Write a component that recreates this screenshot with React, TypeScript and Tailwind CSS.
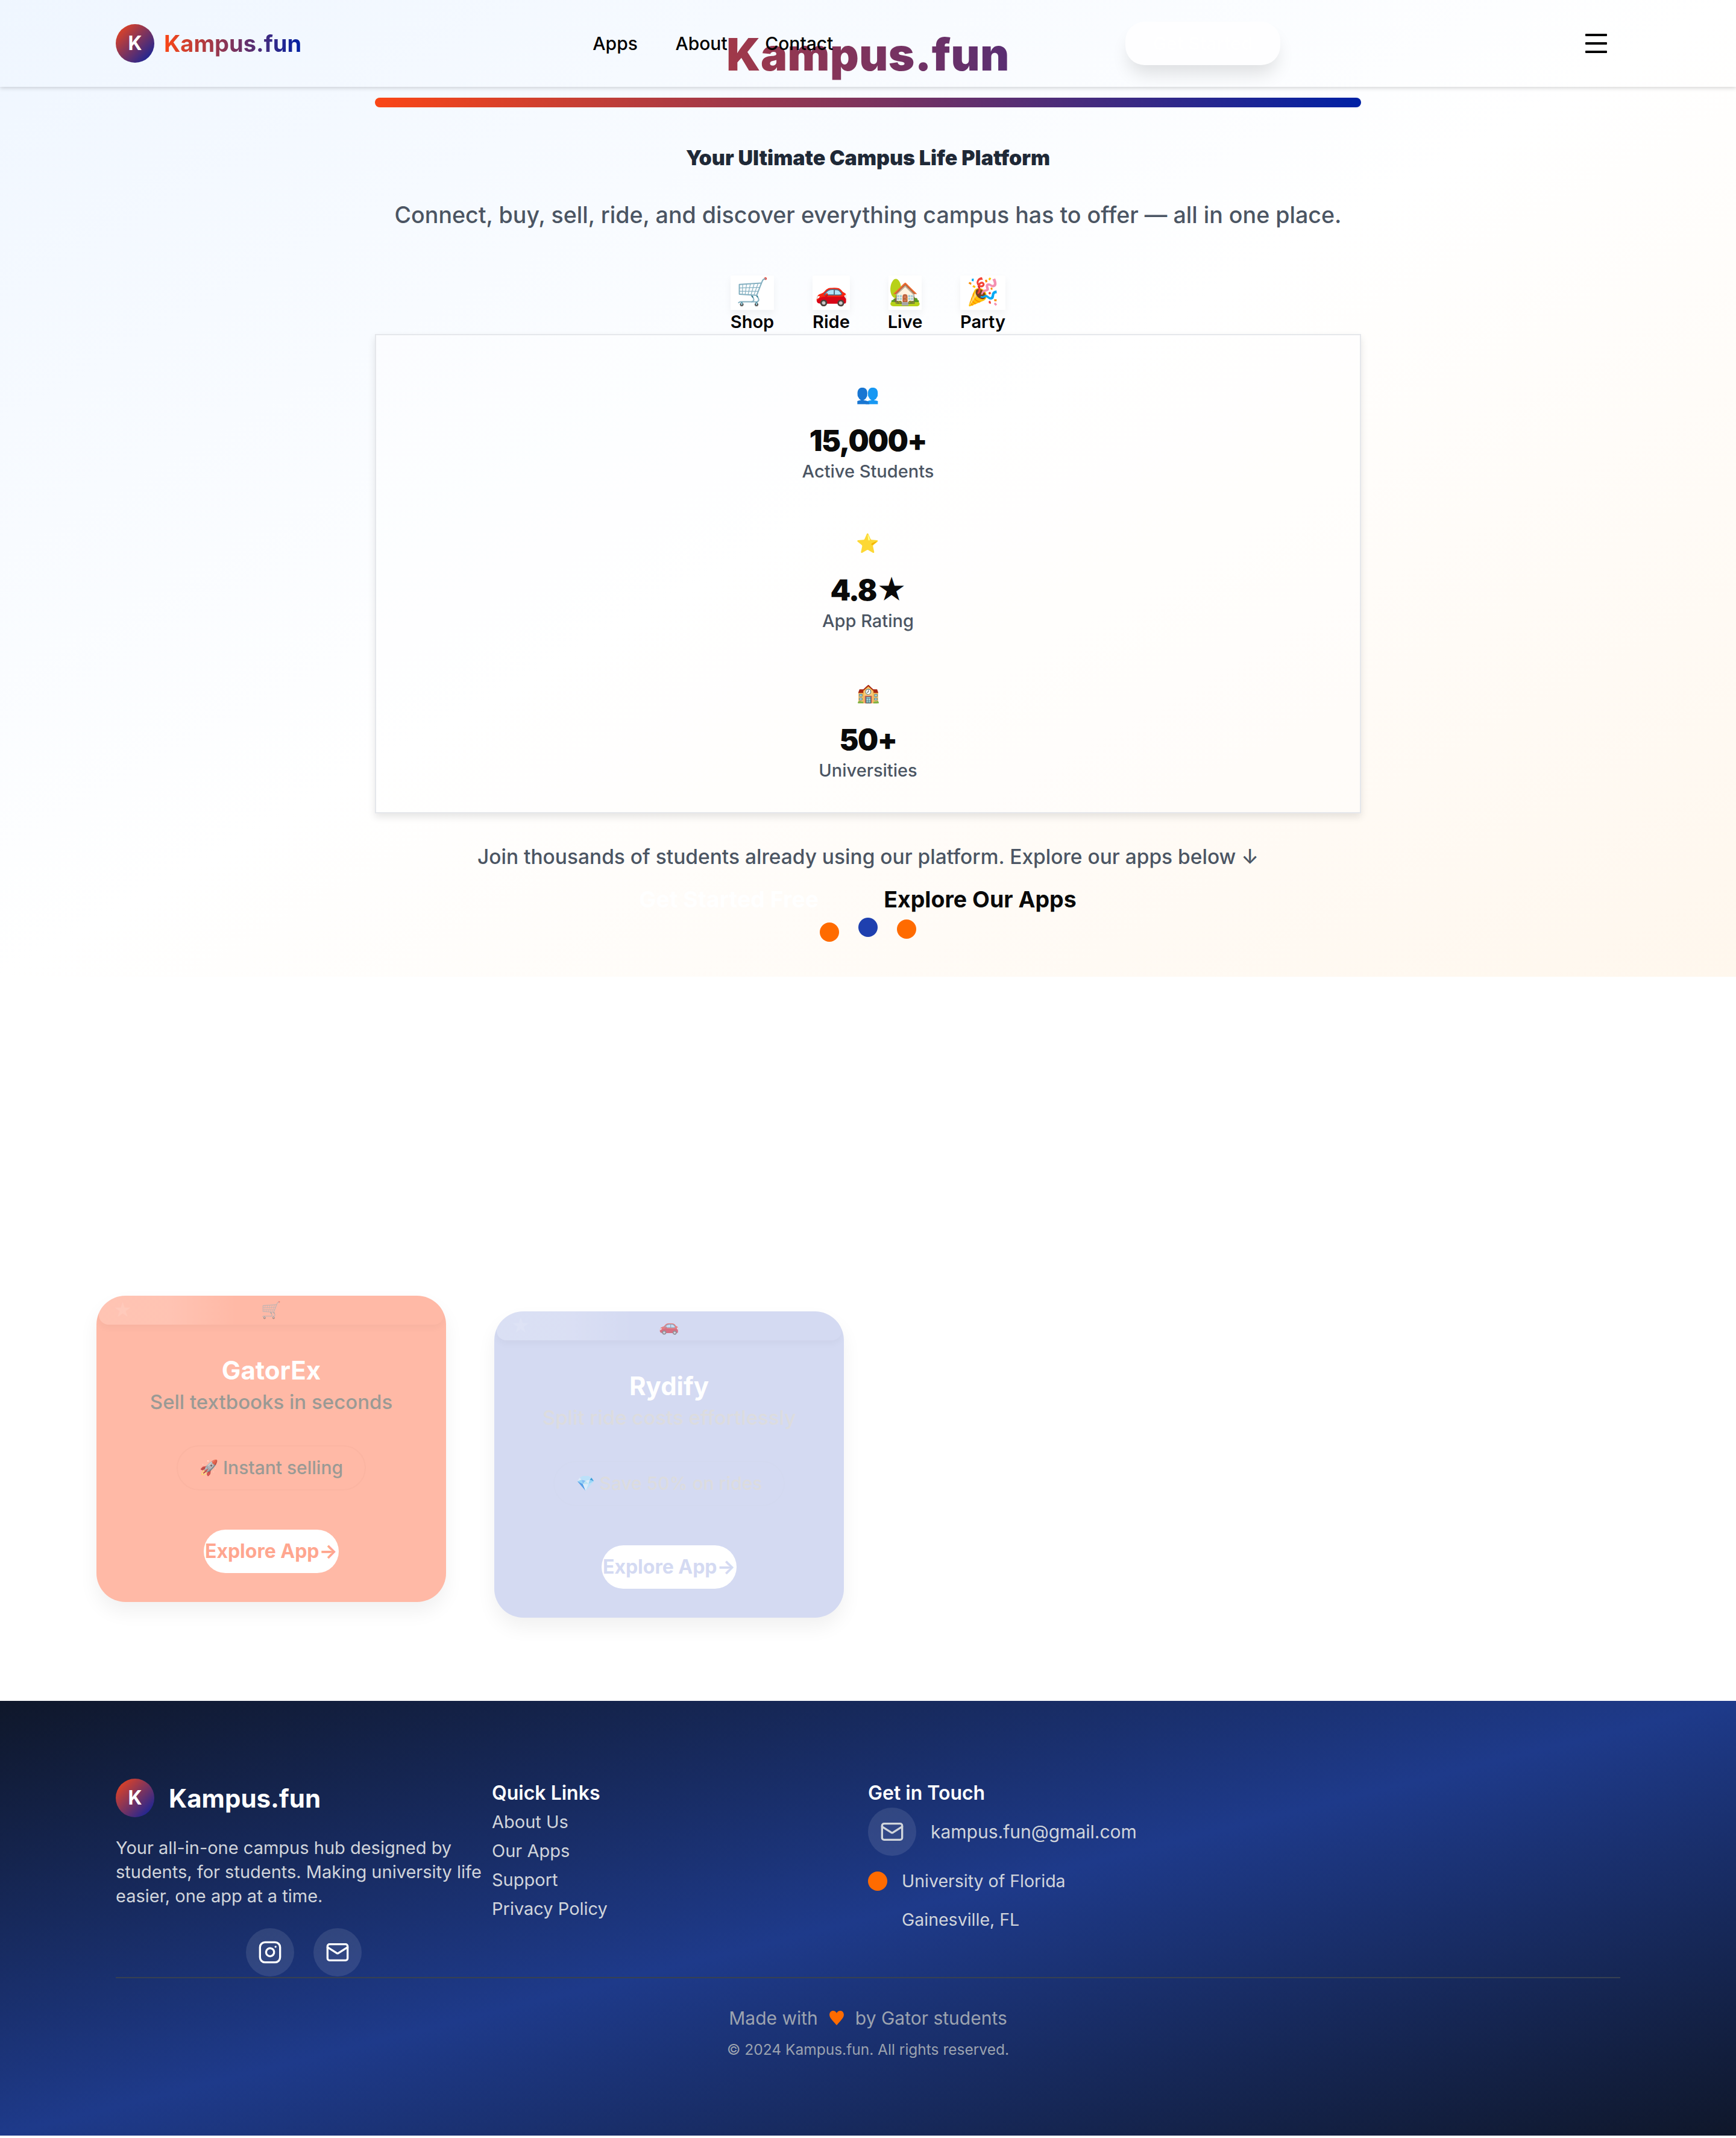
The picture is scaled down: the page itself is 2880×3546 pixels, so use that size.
import { Instagram, Mail } from "lucide-react"

const font = "font-['Inter',sans-serif]"

const categories = [
  { emoji: "🛒", label: "Shop", width: "w-[72px]" },
  { emoji: "🚗", label: "Ride", width: "w-[62px]" },
  { emoji: "🏡", label: "Live", width: "w-[55px]" },
  { emoji: "🎉", label: "Party", width: "w-[75px]" },
]

const stats = [
  { emoji: "👥", value: "15,000+", label: "Active Students" },
  { emoji: "⭐", value: "4.8★", label: "App Rating" },
  { emoji: "🏫", value: "50+", label: "Universities" },
]

function LogoMark() {
  return (
    <div className="flex h-[64px] w-[64px] shrink-0 items-center justify-center rounded-full bg-[linear-gradient(135deg,#fa4616,#0021a5)] text-[32px] font-bold text-white">
      K
    </div>
  )
}

function Header() {
  return (
    <header className="absolute inset-x-0 top-0 z-10 flex h-[144px] items-center justify-between px-[192px] shadow-[0_2px_7px_rgba(0,0,0,0.17)]">
      <div className="flex w-[307px] items-center gap-[16px]">
        <LogoMark />
        <span className="bg-[linear-gradient(to_right,#fa4616,#0021a5)] bg-clip-text text-[38px] font-bold whitespace-nowrap text-transparent">
          Kampus.fun
        </span>
      </div>
      <nav className="flex w-[399px] justify-between text-[30px] font-medium text-black">
        <a>Apps</a>
        <a>About</a>
        <a>Contact</a>
      </nav>
      <button className="h-[72px] w-[257px] rounded-[32px] bg-[#fefeff] text-[30px] font-semibold text-white shadow-[0_20px_30px_-6px_rgba(0,0,0,0.12)]">
        Get Started
      </button>
      <button className="flex w-[80px] flex-col items-center gap-[10px] py-[20px]">
        <span className="h-[4px] w-[36px] rounded-[1px] bg-black" />
        <span className="h-[4px] w-[36px] rounded-[1px] bg-black" />
        <span className="h-[4px] w-[36px] rounded-[1px] bg-black" />
      </button>
    </header>
  )
}

function Hero() {
  return (
    <section className="flex h-[1620px] flex-col items-center bg-[linear-gradient(to_bottom_right,#eff6ff,#ffffff,#fff7ed)] pt-[40px]">
      <div className="flex w-[1636px] flex-col items-center">
        <h1 className="w-full bg-[linear-gradient(to_right,#fa4616,#0021a5)] bg-clip-text text-center text-[74px] leading-[100px] font-black tracking-[0.5px] text-transparent">
          Kampus.fun
        </h1>
        <div className="mt-[22px] h-[16px] w-full rounded-full bg-[linear-gradient(to_right,#fa4616,#0021a5)]" />
        <h2 className="mt-[60px] text-[34px] leading-[48px] font-black text-[#1f2937]">
          Your Ultimate Campus Life Platform
        </h2>
        <p className="mt-[41px] text-[37.6px] leading-[60px] font-medium whitespace-nowrap text-[#4b5563]">
          Connect, buy, sell, ride, and discover everything campus has to offer — all in one place.
        </p>
        <div className="mt-[70px] flex gap-[64px]">
          {categories.map((c) => (
            <div key={c.label} className={`flex flex-col items-center ${c.width}`}>
              <div className="flex h-[57px] w-full items-center justify-center bg-white pb-[6px] text-[44px] leading-none shadow-[0_6px_12px_rgba(0,0,0,0.05)]">
                {c.emoji}
              </div>
              <span className="text-[29px] leading-[40px] font-semibold text-black">{c.label}</span>
            </div>
          ))}
        </div>
        <div className="w-full border-2 border-[#e5e7eb] bg-white/40 pt-[73px] pb-[54px] shadow-[0_6px_12px_rgba(0,0,0,0.1)]">
          <div className="flex flex-col items-center gap-[80px]">
            {stats.map((s) => (
              <div key={s.label} className="flex flex-col items-center">
                <span className="text-[31px] leading-[48px]">{s.emoji}</span>
                <span className="mt-[18px] text-[48px] leading-[72px] font-black tracking-[-1.5px] text-[#0a0a0a]">{s.value}</span>
                <span className="text-[29px] leading-[30px] font-medium text-[#4b5563]">{s.label}</span>
              </div>
            ))}
          </div>
        </div>
        <p className="mt-[48px] text-[33.5px] leading-[48px] font-medium text-[#4b5563]">
          Join thousands of students already using our platform. Explore our apps below ↓
        </p>
        <div className="mt-[20px] flex items-center gap-[108px] pr-[34px] text-[37.5px] leading-[54px] font-bold">
          <span className="text-white">Get Started Free</span>
          <span className="text-[#0a0a0a]">Explore Our Apps</span>
        </div>
        <div className="mt-[3px] flex items-start gap-[32px]">
          <span className="mt-[8px] h-[32px] w-[32px] rounded-full bg-[#ff6b00]" />
          <span className="h-[32px] w-[32px] rounded-full bg-[#1e40af]" />
          <span className="mt-[3px] h-[32px] w-[32px] rounded-full bg-[#ff6b00]" />
        </div>
      </div>
    </section>
  )
}

function AppCard(props: {
  emoji: string
  name: string
  tagline: string
  perkIcon: string
  perk: string
  bg: string
  subColor: string
  btnColor: string
  pillBorder: string
  stagger: string
}) {
  return (
    <div className={`relative flex h-[508px] flex-col items-center overflow-hidden rounded-[48px] shadow-[0_16px_32px_rgba(0,0,0,0.06)] ${props.bg} ${props.stagger}`}>
      <div className="absolute inset-x-[4px] top-0 flex h-[48px] items-center rounded-b-[16px] bg-gradient-to-r from-white/15 from-20% to-transparent to-40% pl-[24px] text-[30px] text-white/10 shadow-[0_6px_12px_rgba(0,0,0,0.03)]">
        ★
      </div>
      <span className="relative mt-[6px] h-[36px] text-[27px] leading-[36px] opacity-50">{props.emoji}</span>
      <h3 className="mt-[52px] text-[42px] leading-[60px] font-bold text-white">{props.name}</h3>
      <p className={`text-[33px] leading-[44px] font-medium whitespace-nowrap ${props.subColor}`}>{props.tagline}</p>
      <div className={`mt-[50px] flex h-[75px] items-center gap-[8px] rounded-full border-2 px-[36px] text-[30px] font-medium whitespace-nowrap ${props.pillBorder} ${props.subColor}`}>
        <span className="text-[25px] opacity-70">{props.perkIcon}</span>
        {props.perk}
      </div>
      <button className={`mt-[65px] flex h-[72px] w-[224px] items-center justify-center rounded-full bg-white text-[32px] font-bold whitespace-nowrap ${props.btnColor}`}>
        Explore App→
      </button>
    </div>
  )
}

function Apps() {
  return (
    <section className="grid h-[1201px] grid-cols-4 items-start gap-[80px] bg-white px-[160px] pt-[529px]">
      <AppCard emoji="🛒" name="GatorEx" tagline="Sell textbooks in seconds" perkIcon="🚀" perk="Instant selling" bg="bg-[#ffb9a6]" subColor="text-[#9a9a95]" btnColor="text-[#ffa68f]" pillBorder="border-[#fbb5a2]" stagger="" />
      <AppCard emoji="🚗" name="Rydify" tagline="Split ride costs effortlessly" perkIcon="💎" perk="Save 50% on rides" bg="bg-[#d4daf2]" subColor="text-[#dcdcde]" btnColor="text-[#d4daf2]" pillBorder="border-[#d3d9f0]" stagger="mt-[26px]" />
    </section>
  )
}

function Footer() {
  return (
    <footer className="h-[721px] bg-[linear-gradient(to_bottom_right,#0f172a,#1e3a8a,#0f172a)] px-[192px] pt-[129px]">
      <div className="grid h-[329px] grid-cols-4">
        <div>
          <div className="flex items-center gap-[24px]">
            <LogoMark />
            <span className="text-[42px] font-bold text-white">Kampus.fun</span>
          </div>
          <p className="mt-[31px] text-[29px] leading-[40px] whitespace-nowrap text-[#d1d5db]">
            Your all-in-one campus hub designed by
            <br />
            students, for students. Making university life
            <br />
            easier, one app at a time.
          </p>
          <div className="mt-[33px] flex justify-center gap-[32px]">
            <span className="flex h-[80px] w-[80px] items-center justify-center rounded-full bg-white/10 text-white">
              <Instagram size={40} />
            </span>
            <span className="flex h-[80px] w-[80px] items-center justify-center rounded-full bg-white/10 text-white">
              <Mail size={40} />
            </span>
          </div>
        </div>
        <div>
          <h4 className="text-[32px] leading-[48px] font-semibold text-white">Quick Links</h4>
          <ul className="text-[29px] leading-[48px] text-[#d1d5db]">
            <li>About Us</li>
            <li>Our Apps</li>
            <li>Support</li>
            <li>Privacy Policy</li>
          </ul>
        </div>
        <div>
          <h4 className="text-[32px] leading-[48px] font-semibold text-white">Get in Touch</h4>
          <div className="flex items-center gap-[24px] text-[30px] text-[#d1d5db]">
            <span className="flex h-[80px] w-[80px] items-center justify-center rounded-full bg-white/10">
              <Mail size={40} />
            </span>
            kampus.fun@gmail.com
          </div>
          <div className="mt-[24px] flex items-center gap-[24px] text-[28.5px] leading-[36px] text-[#d1d5db]">
            <span className="h-[32px] w-[32px] rounded-full bg-[#ff6b00]" />
            University of Florida
          </div>
          <div className="mt-[28px] pl-[56px] text-[28.5px] leading-[36px] text-[#d1d5db]">Gainesville, FL</div>
        </div>
      </div>
      <div className="border-t-2 border-[#374151] pt-[44px] text-center">
        <p className="flex items-center justify-center gap-[18px] text-[30px] leading-[44px] text-[#9ca3af]">
          Made with
          <svg viewBox="0 0 24 24" className="h-[26px] w-[26px] fill-[#ff6b00]">
            <path d="M12 23 C6 16 1 12 1 7 C1 3.500 3.500 1 6.500 1 C9 1 11 2.500 12 4.500 C13 2.500 15 1 17.500 1 C20.500 1 23 3.500 23 7 C23 12 18 16 12 23 Z" />
          </svg>
          by Gator students
        </p>
        <p className="mt-[10px] text-[24.5px] leading-[40px] text-[#9ca3af]">© 2024 Kampus.fun. All rights reserved.</p>
      </div>
    </footer>
  )
}

export default function App() {
  return (
    <div className={`relative w-[2880px] ${font}`}>
      <Header />
      <Hero />
      <Apps />
      <Footer />
    </div>
  )
}
